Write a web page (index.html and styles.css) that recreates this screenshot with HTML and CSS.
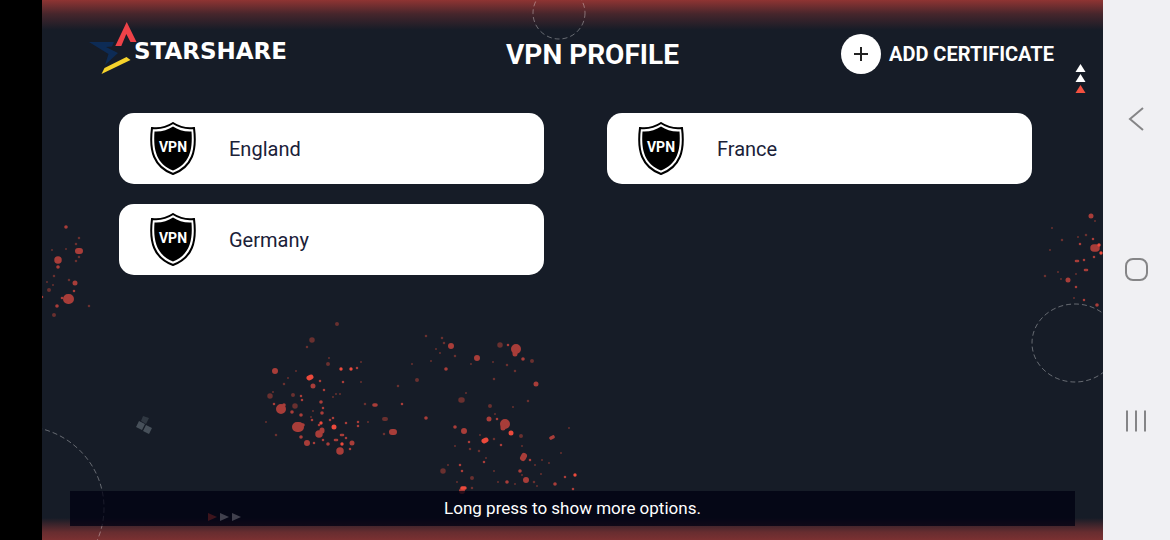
FILE: index.html
```html
<!DOCTYPE html>
<html lang="en">
<head>
    <meta charset="UTF-8">
    <meta name="viewport" content="width=device-width, initial-scale=1.0">
    <title>Starshare - VPN Profile</title>
    <link rel="stylesheet" href="styles.css">
</head>
<body>
    <div class="cutout"></div>

    <div class="screen">
        <svg class="backdrop" viewBox="42 0 1061 540" preserveAspectRatio="xMidYMid slice" aria-hidden="true">
            <g class="rings">
                <circle cx="559" cy="13" r="26" />
                <ellipse cx="1075" cy="343" rx="43" ry="39" />
                <ellipse cx="20" cy="508" rx="84" ry="82" />
            </g>

            <!-- paint drops, one path per size -->
            <g class="drops">
                <path stroke-width="10" d="M297 427h2M68 299h1M505 424h0M516 349h0M281 409h0" />
                <path stroke-width="7.5" d="M319 434h0M340 451h0M1094 248h2M58 260h0" />
                <path stroke-width="6" d="M275 371h0M392 432h2M307 443h0M451 346h0M477 358h0M464 431h0M526 480h0M523 458l1 -2M78 251h2M462 491h0" />
                <path stroke-width="5" d="M313 386h0M352 443h0M536 384h0M489 419h0M75 283h0M1068 280h0M1091 216h0M515 353v1M503 427v1M322 430v1" />
                <path stroke-width="3.6" d="M374 405h2M301 415h0M292 412h0M322 413h0M321 402h0M446 369h0M426 418h0M551 438l2 -1M520 471h0M58 267h0M57 306h0M66 227h0M1097 305h0M328 444h0M523 359h0M507 482h0M455 427h0M555 484h0M301 437h0M284 405h0M302 425h1" />
                <path stroke-width="2.6" d="M402 404h0M357 368h0M343 382h0M301 396h0M274 404h0M324 390h0M320 381h0M341 435h2M346 423h0M358 422h0M358 426h0M335 440h2M350 449h0M346 438h0M319 425h0M508 345h0M497 419h0M501 445h0M484 462h0M469 442h0M573 489h0M565 477h0M530 460h0M462 471h0M460 465h0M74 291h0M42 297h0M62 298h0M1076 261h2M1085 270h2M1093 239h0M1094 257h0M1080 244h0M1084 300h0M1076 287h0M1084 260h0M302 400h0M330 420h0M323 408h0M314 443h0M323 440h0M333 418h0M312 420h0" />
            </g>
            <g class="drops dim">
                <path stroke-width="5.5" d="M312 340h0M270 396h0M295 406h0M500 345h0M461 400h1M443 471h0" />
                <path stroke-width="4" d="M337 324h0M384 419h2M328 364h0M417 380h0M532 361h0M490 406h0M521 436h0M472 478h0M54 315h0M49 290h0M293 395h0" />
                <path stroke-width="2.6" d="M365 404h0M276 435h0M398 386h0M384 434h0M307 347h0M284 384h0M426 336h0M455 356h0M515 371h0M507 365h0M494 379h0M494 439h0M528 401h0M479 451h0M470 449h0M472 488h0M534 482h0M442 338h0M444 343h0M76 261h0M76 244h0M79 238h0M54 276h0M69 280h0M89 306h0M1086 235h0M1062 240h0M1045 276h0M79 257h0" />
                <path stroke-width="2" d="M361 382h0M288 378h0M471 364h0M412 364h0M493 362h0M448 465h0M561 453h0M569 428h0M522 475h0M66 249h0M1052 228h0M1050 250h0M1076 274h0M1074 298h0M1061 279h0M1058 272h0M273 392h0M266 422h0M361 362h0M336 394h0M340 394h0M333 397h0M368 422h0M329 358h0M436 349h0M440 353h0M431 361h0M466 393h0M513 407h0M495 414h0M480 435h0M455 446h0M486 458h0M494 471h0M535 465h0M542 460h0M549 463h0M541 474h0M522 446h0M498 482h0M515 484h0M537 486h0M457 482h0M311 417h0M296 371h0M313 411h0M52 250h0M47 282h0M53 285h0M1095 221h0M1078 237h0" />
            </g>
            <g class="drops bright">
                <path stroke-width="5" d="M309 378l2 -1M334 427h0M511 433h0M484 441l2 -1" />
                <path stroke-width="3.4" d="M321 423h0M351 369h0M341 369h0M342 444h0M575 475h0M1099 245h0M1101 253h0M462 488h3" />
            </g>

            <path class="marker" d="M1080.500 64l5 8h-10zM1080.500 74l5 8h-10zM220 513l9 4-9 4zM232 513l9 4-9 4z" />
            <path class="marker-red" d="M1080.500 85l5 8h-10zM208 513l9 4-9 4z" />
            <path class="dice" d="M139 421l6 3-3 6-6-3zM146 425l6 3-3 6-6-3z" />
            <path class="dice dice-dim" d="M143 416l6 2-3 6-5-3z" />
        </svg>

        <header class="topbar">
            <svg class="logo" viewBox="88 22 254 64" role="img" aria-label="Starshare">
                <path fill="#ee4248" d="M125.700 22l9.800 20h-6l-4.200-8-5 12h-6z" />
                <path fill="#0d2b55" d="M88 42h25l-2 4.500-6 .5 12 6-13 12 3.500-11z" />
                <path fill="#f6d32b" d="M100.500 74l3-6 22-11 4 3z" />
                <text class="wordmark" x="133" y="59">STARSHARE</text>
            </svg>
            <h1>VPN PROFILE</h1>
            <button class="add" type="button">
                <span class="plus">
                    <svg viewBox="0 0 16 16" aria-hidden="true"><path d="M8 1v14M1 8h14" /></svg>
                </span>
                ADD CERTIFICATE
            </button>
        </header>

        <main class="profiles">
            <button class="profile" type="button">
                <svg class="shield" viewBox="0 0 46 53" aria-hidden="true">
                    <path class="rim" d="M23 1C17 5 10 7 2 6C-1 29 4 45 23 52C42 45 47 29 44 6C36 7 29 5 23 1z" />
                    <path d="M23 4.500C18 8 11 10 4.500 9.500C3 29 7 42 23 48.500C39 42 43 29 41.500 9.500C35 10 28 8 23 4.500z" />
                    <text x="23" y="30" text-anchor="middle">VPN</text>
                </svg>
                England
            </button>
            <button class="profile" type="button">
                <svg class="shield" viewBox="0 0 46 53" aria-hidden="true">
                    <path class="rim" d="M23 1C17 5 10 7 2 6C-1 29 4 45 23 52C42 45 47 29 44 6C36 7 29 5 23 1z" />
                    <path d="M23 4.500C18 8 11 10 4.500 9.500C3 29 7 42 23 48.500C39 42 43 29 41.500 9.500C35 10 28 8 23 4.500z" />
                    <text x="23" y="30" text-anchor="middle">VPN</text>
                </svg>
                France
            </button>
            <button class="profile" type="button">
                <svg class="shield" viewBox="0 0 46 53" aria-hidden="true">
                    <path class="rim" d="M23 1C17 5 10 7 2 6C-1 29 4 45 23 52C42 45 47 29 44 6C36 7 29 5 23 1z" />
                    <path d="M23 4.500C18 8 11 10 4.500 9.500C3 29 7 42 23 48.500C39 42 43 29 41.500 9.500C35 10 28 8 23 4.500z" />
                    <text x="23" y="30" text-anchor="middle">VPN</text>
                </svg>
                Germany
            </button>
        </main>

        <p class="hint">Long press to show more options.</p>
    </div>

    <nav class="sysbar">
        <button type="button" aria-label="Back">
            <svg viewBox="0 0 24 24"><path d="M18 1L5 12l13 11" /></svg>
        </button>
        <button type="button" aria-label="Home">
            <svg viewBox="0 0 24 24"><rect x="1" y="1" width="21" height="21" rx="7" /></svg>
        </button>
        <button type="button" aria-label="Recent apps">
            <svg viewBox="0 0 24 24"><path d="M2 1.500v21M11 1.500v21M20 1.500v21" /></svg>
        </button>
    </nav>
</body>
</html>
```
FILE: styles.css
```css
* {
    box-sizing: border-box;
}

body {
    display: flex;
    min-height: 100vh;
    margin: 0;
    background: #000;
    font-family: Roboto, "Liberation Sans", sans-serif;
}

button {
    border: 0;
    padding: 0;
    background: none;
    font-family: inherit;
    cursor: pointer;
}

.cutout {
    flex: 0 0 42px;
}

.screen {
    position: relative;
    flex: 1;
    display: flex;
    flex-direction: column;
    overflow: hidden;
    background: linear-gradient(#8f3433, rgba(143, 52, 51, 0.4) 14px, transparent 30px),
        linear-gradient(to top, #7b3132, rgba(123, 49, 50, 0.8) 8px, transparent 22px),
        #161c27;
}

/* decoration */
.backdrop {
    position: absolute;
    top: 0;
    left: 0;
    width: 100%;
    height: 100%;
}

.rings {
    fill: none;
    stroke: #fff;
    stroke-opacity: 0.35;
    stroke-dasharray: 5 3;
}

.drops {
    stroke: #a83d39;
    stroke-linecap: round;
}

.drops.dim {
    stroke: #69302f;
}

.drops.bright {
    stroke: #ec4a3c;
}

.marker {
    fill: #fff;
}

.marker-red {
    fill: #f4503f;
}

.dice {
    fill: #47505a;
}

.dice-dim {
    fill: #303842;
}

/* header */
.topbar {
    position: relative;
    display: flex;
    align-items: center;
    justify-content: space-between;
    padding: 22px 49px 22px 46px;
    color: #fff;
}

.logo {
    width: 256px;
    height: 64px;
}

.wordmark {
    fill: #fff;
    font-family: "DejaVu Sans", sans-serif;
    font-size: 23px;
    font-weight: bold;
}

h1 {
    margin: 0;
    font-size: 28px;
    font-weight: bold;
}

.add {
    display: flex;
    align-items: center;
    gap: 8px;
    color: #fff;
    font-size: 20px;
    font-weight: bold;
}

.plus {
    display: flex;
    align-items: center;
    justify-content: center;
    width: 40px;
    height: 40px;
    border-radius: 50%;
    background: #fff;
}

.plus svg {
    width: 16px;
    height: 16px;
    stroke: #222;
    stroke-width: 2;
}

/* profile list */
.profiles {
    position: relative;
    flex: 1;
    display: grid;
    grid-template-columns: 1fr 1fr;
    align-content: start;
    gap: 20px 63px;
    padding: 5px 71px 20px 77px;
}

.profile {
    display: flex;
    align-items: center;
    gap: 33px;
    height: 71px;
    padding: 0 31px;
    border-radius: 15px;
    background: #fff;
    color: #1a2138;
    font-size: 20px;
}

.shield {
    width: 46px;
    height: 53px;
}

.shield .rim {
    fill: #fff;
    stroke: #000;
    stroke-width: 2;
}

.shield text {
    fill: #fff;
    font-size: 14px;
    font-weight: bold;
}

.hint {
    position: relative;
    margin: 0 28px 14px;
    background: rgba(0, 0, 18, 0.75);
    color: #fff;
    font-size: 17px;
    line-height: 35px;
    text-align: center;
}

/* android buttons */
.sysbar {
    flex: 0 0 67px;
    display: flex;
    flex-direction: column;
    align-items: center;
    justify-content: space-around;
    padding: 43px 0;
    background: #f0f0f3;
}

.sysbar button {
    display: flex;
}

.sysbar svg {
    width: 24px;
    height: 24px;
    fill: none;
    stroke: #858587;
    stroke-width: 2;
}
```
